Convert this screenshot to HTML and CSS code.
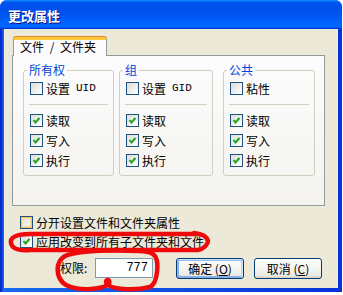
FILE: index.html
```html
<!DOCTYPE html>
<html lang="zh-CN">
<head>
    <meta charset="UTF-8" />
    <title>更改属性</title>
    <link rel="stylesheet" href="styles.css">
</head>
<body>
    <div class="window">
        <div class="titlebar">更改属性</div>
        <div class="client">
            <div class="tabs"><div class="tab">文件 / 文件夹</div></div>
            <div class="panel">
                <fieldset class="group g1">
                    <legend>所有权</legend>
                    <label class="check"><span class="box"></span>设置 <span class="mono">UID</span></label>
                    <div class="sep"></div>
                    <label class="check"><span class="box on"><svg viewBox="0 0 11 11"><path d="M2.5 5 L4.5 7.5 L8.5 3"/></svg></span>读取</label>
                    <label class="check"><span class="box on"><svg viewBox="0 0 11 11"><path d="M2.5 5 L4.5 7.5 L8.5 3"/></svg></span>写入</label>
                    <label class="check"><span class="box on"><svg viewBox="0 0 11 11"><path d="M2.5 5 L4.5 7.5 L8.5 3"/></svg></span>执行</label>
                </fieldset>
                <fieldset class="group g2">
                    <legend>组</legend>
                    <label class="check"><span class="box"></span>设置 <span class="mono">GID</span></label>
                    <div class="sep"></div>
                    <label class="check"><span class="box on"><svg viewBox="0 0 11 11"><path d="M2.5 5 L4.5 7.5 L8.5 3"/></svg></span>读取</label>
                    <label class="check"><span class="box on"><svg viewBox="0 0 11 11"><path d="M2.5 5 L4.5 7.5 L8.5 3"/></svg></span>写入</label>
                    <label class="check"><span class="box on"><svg viewBox="0 0 11 11"><path d="M2.5 5 L4.5 7.5 L8.5 3"/></svg></span>执行</label>
                </fieldset>
                <fieldset class="group g3">
                    <legend>公共</legend>
                    <label class="check"><span class="box"></span>粘性</label>
                    <div class="sep"></div>
                    <label class="check"><span class="box on"><svg viewBox="0 0 11 11"><path d="M2.5 5 L4.5 7.5 L8.5 3"/></svg></span>读取</label>
                    <label class="check"><span class="box on"><svg viewBox="0 0 11 11"><path d="M2.5 5 L4.5 7.5 L8.5 3"/></svg></span>写入</label>
                    <label class="check"><span class="box on"><svg viewBox="0 0 11 11"><path d="M2.5 5 L4.5 7.5 L8.5 3"/></svg></span>执行</label>
                </fieldset>
            </div>

            <div class="options">
                <label class="check row"><span class="box hover"></span>分开设置文件和文件夹属性</label>
                <label class="check row"><span class="box on"><svg viewBox="0 0 11 11"><path d="M2.5 5 L4.5 7.5 L8.5 3"/></svg></span>应用改变到所有子文件夹和文件</label>
            </div>

            <div class="footer">
                <span class="perm-label">权限:</span>
                <input class="perm" type="text" value="777" />
                <button class="btn default">确定 (<u>O</u>)</button>
                <button class="btn">取消 (<u>C</u>)</button>
            </div>
        </div>

        <!-- red marks drawn over the screenshot -->
        <svg class="marks" viewBox="0 0 343 295">
            <path d="M198 234 L30 234 C15 234 10 238 11 243 C12 249 18 251 30 250 L198 250 C204 249 208 244 208 241 C207 237 204 234 194 233"/>
            <path d="M140 251 C110 250 80 250 65 256 C55 262 55 278 66 285 C78 291 98 290 108 285 C112 280 106 278 106 282 C108 290 135 291 150 287 C158 283 159 262 155 256 C152 252 146 251 138 251"/>
        </svg>
    </div>
</body>
</html>
```

FILE: styles.css
```css
body { margin: 0; background: #fff; font: 12px "Noto Sans CJK SC", sans-serif; color: #000; }
.window { position: relative; width: 342px; height: 292px; display: flex; flex-direction: column; border-radius: 7px 7px 0 0; background: linear-gradient(90deg, #0627c7, #0831d9 2px, #166aee 3px, #0831d9); }
.titlebar { height: 29px; box-sizing: border-box; padding: 1px 0 0 8px; display: flex; align-items: center; border-radius: 7px 7px 0 0; color: #fff; font-size: 13px; font-weight: bold; text-shadow: 1px 1px #0f1089; background: linear-gradient(180deg, #0997ff, #0053ee 8%, #0050ee 40%, #06f 88%, #06f 93%, #005bff 95%, #003dd7 96%, #003dd7); }
.client { flex: 1; margin: 0 4px 4px; background: #ece9d8; }

.tabs { padding: 8px 0 0 9px; height: 26px; box-sizing: border-box; }
.tab { display: inline-block; position: relative; z-index: 1; height: 19px; box-sizing: border-box; padding: 0 6px 2px; line-height: 14px; word-spacing: 3px; background: #fcfcfe; border: 1px solid #919b9c; border-top: 3px solid #ffc83c; border-bottom: none; box-shadow: 0 -1px #e68b2c; border-radius: 3px 3px 0 0; width: 94px; white-space: nowrap; }

.panel { margin-left: 8px; width: 313px; height: 151px; box-sizing: border-box; border: 1px solid #919b9c; padding: 7px 0 0 10px; display: flex; align-items: flex-start; background: linear-gradient(180deg, #fcfcfe, #f4f3ee); }
.group { box-sizing: border-box; margin: 0; padding: 0 6px 5px; border: 1px solid #d0d0bf; border-radius: 3px; min-width: 0; }
.group legend { margin-left: -3px; padding: 0 2px; line-height: 14px; color: #0046d5; }
.g1 { width: 91px; }
.g2 { width: 94px; margin-left: 5px; }
.g3 { width: 92px; margin-left: 10px; }
.group .check:first-of-type { margin-top: 1px; }
.sep { height: 1px; margin: 6px -1px 5px; background: #d0d0bf; }
.mono { font-family: "Liberation Mono", monospace; font-size: 11px; margin-left: 3px; }

.check { display: flex; align-items: center; gap: 3px; height: 20px; white-space: nowrap; }
.box { width: 13px; height: 13px; box-sizing: border-box; border: 1px solid #1c5180; background: linear-gradient(135deg, #dcdcd7, #fff); display: flex; align-items: center; justify-content: center; flex: none; }
.box svg { width: 11px; height: 11px; }
.box path { fill: none; stroke: #21a121; stroke-width: 2; }
.box.hover { box-shadow: inset 0 0 0 1px #fac75e, inset 0 0 0 2px #f8de9e; }

.options { margin-top: 7px; padding-left: 16px; }
.options .row { height: 19px; }

.footer { margin-top: 7px; padding-left: 56px; display: flex; align-items: flex-start; height: 21px; }
.perm-label { width: 35px; line-height: 20px; }
.perm { width: 58px; height: 20px; box-sizing: border-box; margin: 0; border: 1px solid #7f9db9; padding: 0 4px; text-align: right; font: 12px "Liberation Mono", monospace; background: #fff; }
.btn { width: 68px; height: 21px; margin: 0 0 0 23px; padding: 0; border: 1px solid #003c74; border-radius: 3px; font: 12px "Noto Sans CJK SC", sans-serif; color: #000; background: linear-gradient(180deg, #fff, #ecebe6 86%, #d6d0c5); }
.btn + .btn { margin-left: 10px; }
.btn.default { box-shadow: inset -1px 1px #cee7ff, inset 1px 2px #98b8ea, inset -2px 2px #bcd4f6, inset 1px -1px #89ade4, inset 2px -2px #89ade4; }
.btn u { text-decoration: underline; }

.marks { position: absolute; left: 0; top: 0; width: 343px; height: 295px; pointer-events: none; }
.marks path { fill: none; stroke: #ee0a0a; stroke-width: 4.5; stroke-linecap: round; stroke-linejoin: round; }
```
